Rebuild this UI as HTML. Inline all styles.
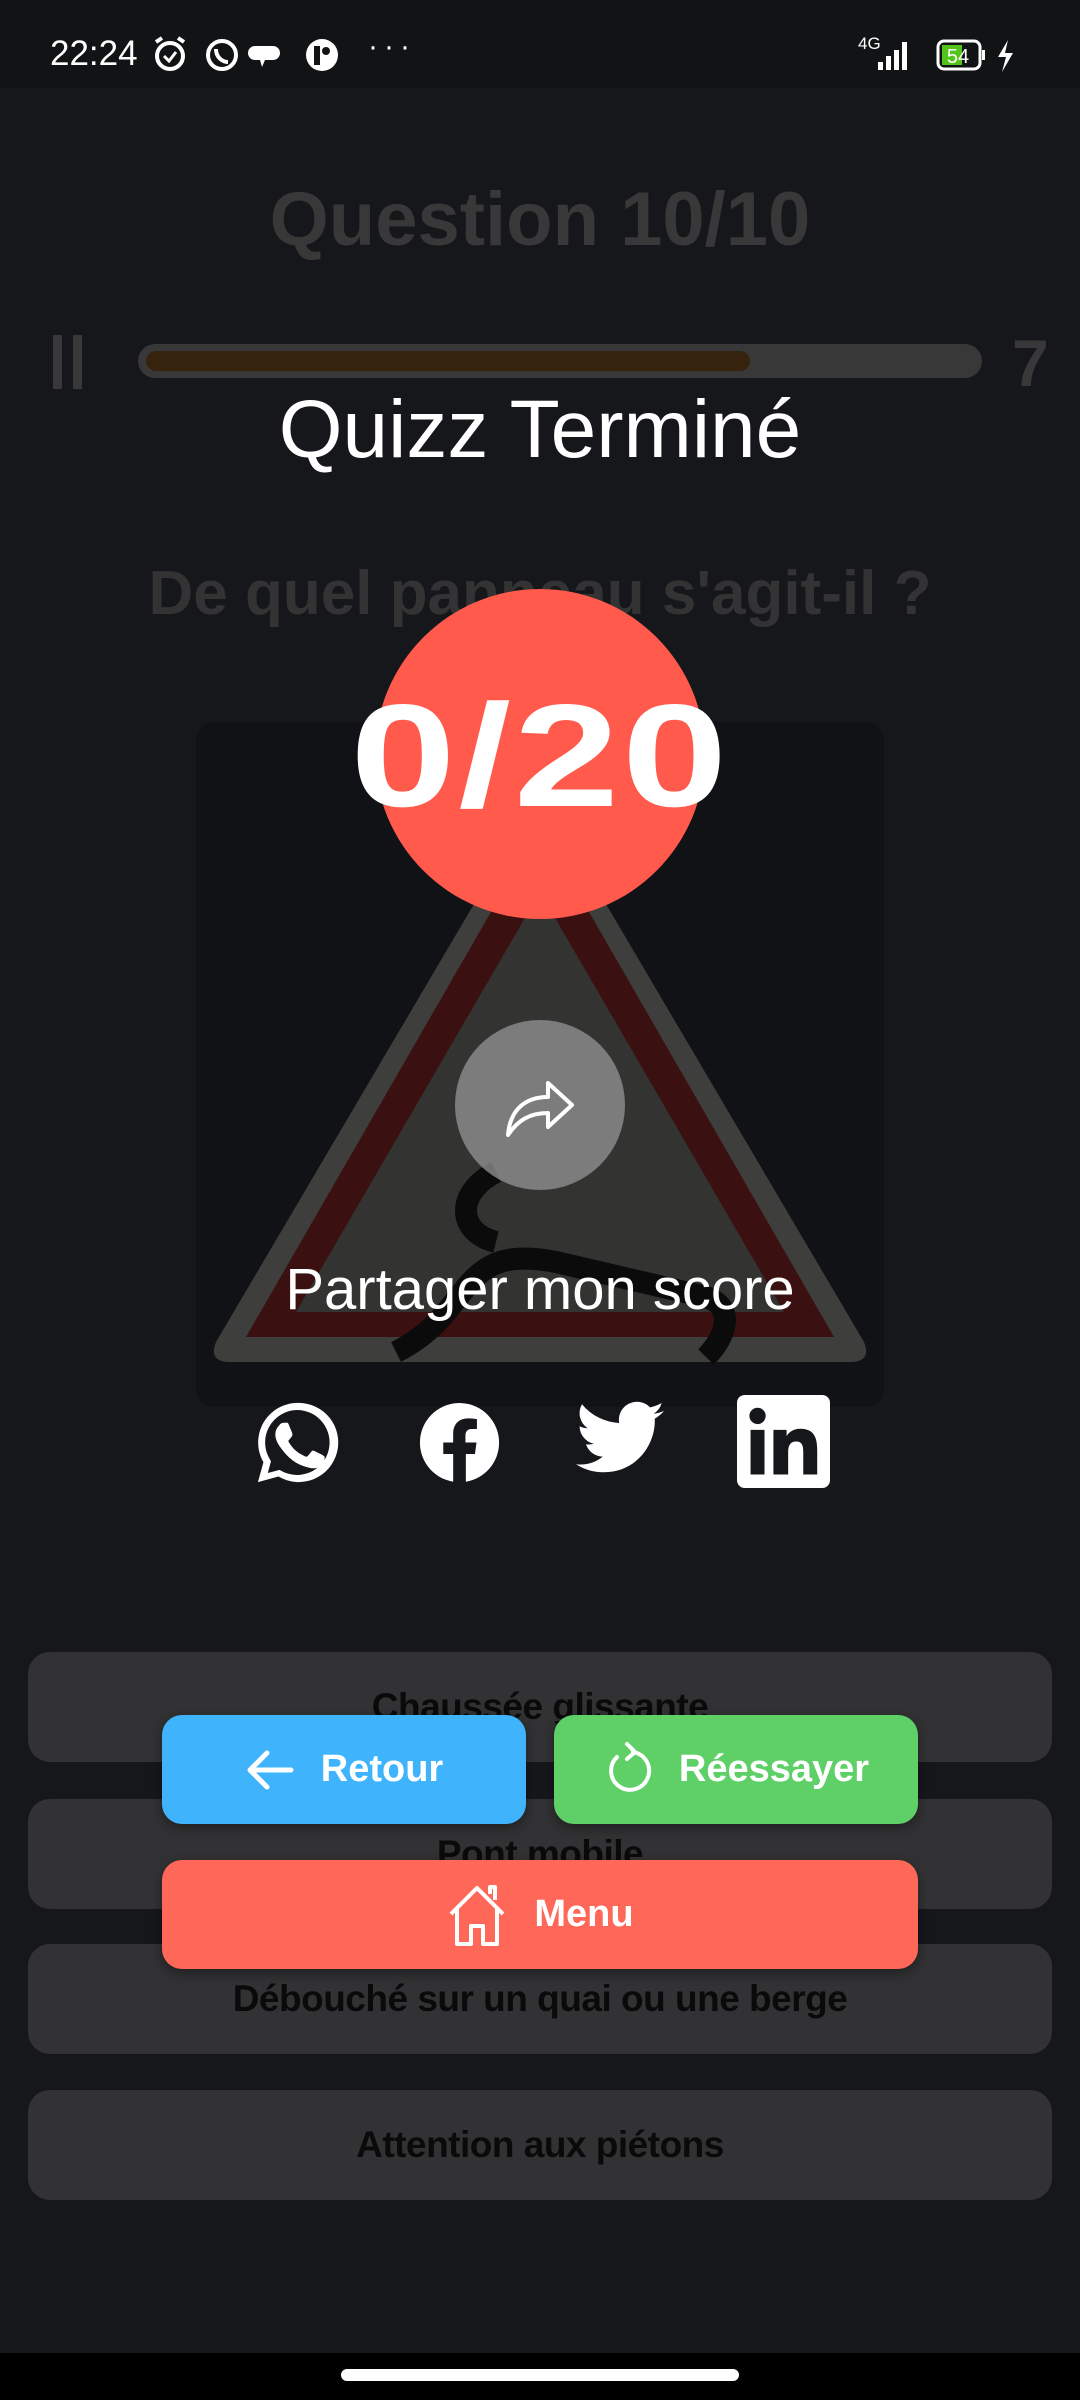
<!DOCTYPE html>
<html><head><meta charset="utf-8"><style>
*{margin:0;padding:0;box-sizing:border-box}
body{width:1080px;height:2400px;background:#15171b;position:relative;overflow:hidden;font-family:"Liberation Sans",sans-serif}
.a{position:absolute}
.c{text-align:center;left:0;width:1080px}
.ans{position:absolute;left:28px;width:1024px;height:110px;background:#323234;border-radius:22px;color:#0a0a0a;font-size:37px;font-weight:bold;letter-spacing:-0.5px;text-align:center;line-height:110px}
.btn{position:absolute;height:109px;border-radius:20px;color:#fff;font-weight:bold;font-size:38px;display:flex;align-items:center;justify-content:center;gap:26px}
</style></head><body>
<div class="a" style="left:0;top:0;width:1080px;height:88px;background:#111315"></div>
<div class="a" style="left:50px;top:34px;color:#fff;font-size:35px">22:24</div>
<svg class="a" style="left:150px;top:34px" width="190" height="42" viewBox="0 0 190 42">
<circle cx="20" cy="22" r="13" fill="none" stroke="#fff" stroke-width="4"/><path d="M14 22l5 5 7-9" stroke="#fff" stroke-width="3" fill="none"/><path d="M6 8l6-4M34 8l-6-4" stroke="#fff" stroke-width="4"/>
<circle cx="72" cy="21" r="14" fill="none" stroke="#fff" stroke-width="4"/><path d="M66 15c0 8 6 13 12 13" stroke="#fff" stroke-width="4" fill="none"/>
<path d="M105 12h18a6 6 0 010 14h-8l-3 7-2-7h-5a7 7 0 010-14z" fill="#fff"/>
<circle cx="172" cy="21" r="16" fill="#fff"/><rect x="164" y="12" width="6" height="19" fill="#111315"/><circle cx="176" cy="17" r="4" fill="#111315"/>
</svg>
<div class="a" style="left:368px;top:30px;color:#fff;font-size:30px;letter-spacing:6px">···</div>
<div class="a" style="left:858px;top:34px;color:#fff;font-size:17px">4G</div>
<svg class="a" style="left:858px;top:38px" width="168" height="36" viewBox="0 0 168 36">
<rect x="20" y="24" width="5" height="8" fill="#fff"/><rect x="28" y="18" width="5" height="14" fill="#fff"/><rect x="36" y="12" width="5" height="20" fill="#fff"/><rect x="44" y="4" width="5" height="28" fill="#fff"/>
<rect x="80" y="3" width="42" height="28" rx="6" fill="none" stroke="#fff" stroke-width="3"/><rect x="84" y="7" width="20" height="20" fill="#52c41a"/><rect x="124" y="12" width="3" height="10" fill="#fff"/>
<text x="100" y="25" font-size="20" fill="#fff" text-anchor="middle" font-family="Liberation Sans">54</text>
<path d="M150 2l-10 17h8l-4 15 11-19h-8z" fill="#fff"/></svg>

<div class="a c" style="top:176px;font-size:76px;font-weight:bold;color:#383838">Question 10/10</div>
<div class="a" style="left:53px;top:335px;width:9px;height:54px;background:#383838"></div>
<div class="a" style="left:73px;top:335px;width:9px;height:54px;background:#383838"></div>
<div class="a" style="left:138px;top:344px;width:844px;height:34px;background:#383838;border-radius:17px"></div>
<div class="a" style="left:146px;top:351px;width:604px;height:20px;background:#35230e;border-radius:10px"></div>
<div class="a" style="left:1012px;top:325px;font-size:66px;font-weight:bold;color:#383838">7</div>
<div class="a c" style="top:383px;font-size:82px;color:#fff">Quizz Terminé</div>
<div class="a c" style="top:558px;font-size:62px;font-weight:bold;color:#333">De quel panneau s'agit-il ?</div>

<div class="a" style="left:196px;top:722px;width:688px;height:685px;background:#111216;border-radius:18px"></div>
<svg class="a" style="left:196px;top:722px" width="688" height="685" viewBox="0 0 688 685">
<path d="M344 70L20 620Q12 640 34 640H654Q676 640 668 620Z" fill="#3e3e3c"/>
<path d="M344 105L50 615H638Z" fill="#3a1010"/>
<path d="M344 170L100 590H588Z" fill="#333331"/>
<path d="M300 520c-40-10-40-50 0-70M200 630c80-40 60-110 160-90l150 35c30 10 20 40 0 60" stroke="#0b0b0b" stroke-width="22" fill="none"/>
</svg>
<div class="a" style="left:375px;top:589px;width:330px;height:330px;border-radius:50%;background:#ff5a4c"></div>
<div class="a c" style="top:672px;font-size:146px;font-weight:bold;color:#fff"><span style="display:inline-block;transform:scaleX(1.3);letter-spacing:2px">0/20</span></div>
<div class="a" style="left:455px;top:1020px;width:170px;height:170px;border-radius:50%;background:rgba(150,150,150,0.75)"></div>
<svg class="a" style="left:500px;top:1065px" width="80" height="80" viewBox="0 0 80 80">
<path d="M8 70C10 45 25 32 48 32V18L72 40 48 62V48C30 48 18 55 8 70Z" fill="none" stroke="#fff" stroke-width="4" stroke-linejoin="round"/></svg>
<div class="a c" style="top:1256px;font-size:58px;color:#fff">Partager mon score</div>

<svg class="a" style="left:250px;top:1395px" width="95" height="95" viewBox="0 0 24 24"><path fill="#fff" d="M12 2A10 10 0 003.4 17L2 22l5.2-1.4A10 10 0 1012 2zm0 1.8a8.2 8.2 0 11-4.2 15.3l-.3-.2-3 .8.8-3-.2-.3A8.2 8.2 0 0112 3.8zM8.5 7c-.3 0-.7.1-1 .5s-1.1 1-1.1 2.5 1.1 2.9 1.2 3.1c.2.2 2.2 3.4 5.3 4.6 2.6 1 3.2.8 3.7.8.6-.1 1.8-.8 2-1.5.3-.7.3-1.3.2-1.5l-.6-.4-2-1c-.3-.1-.5-.1-.7.2l-.9 1.1c-.2.2-.4.2-.7.1-.3-.2-1.300-.5-2.4-1.5-.9-.8-1.5-1.8-1.7-2.1-.2-.3 0-.5.1-.6l.5-.6.3-.5v-.5l-.9-2.2c-.2-.6-.5-.5-.7-.5z"/></svg>
<svg class="a" style="left:412px;top:1395px" width="95" height="95" viewBox="0 0 24 24"><path fill="#fff" d="M22 12a10 10 0 10-11.6 9.9v-7H7.9V12h2.5V9.8c0-2.5 1.5-3.9 3.8-3.900 1.1 0 2.2.2 2.2.2v2.5h-1.3c-1.2 0-1.6.8-1.6 1.6V12h2.8l-.4 2.9h-2.3v7A10 10 0 0022 12z"/></svg>
<svg class="a" style="left:572px;top:1398px" width="96" height="90" viewBox="0 0 24 22"><path fill="#fff" d="M23 3a9 9 0 01-2.6.7A4.5 4.5 0 0022.4 1a9 9 0 01-2.9 1.1A4.5 4.5 0 0011.8 6 12.8 12.8 0 012.5 1.3 4.5 4.5 0 003.9 7.3 4.5 4.5 0 011.9 6.8 4.5 4.5 0 005.5 11.2a4.5 4.5 0 01-2 .1 4.5 4.5 0 004.2 3.1A9 9 0 011 16.3 12.8 12.8 0 007.9 18.3c8.3 0 12.8-6.9 12.8-12.8v-.6A9 9 0 0023 3z"/></svg>
<svg class="a" style="left:737px;top:1395px" width="93" height="93" viewBox="0 0 24 24"><rect width="24" height="24" rx="2" fill="#fff"/><path fill="#15171b" d="M3.5 9h3.6v11.5H3.5zM5.3 3.3a2.1 2.1 0 110 4.2 2.1 2.1 0 010-4.2zM9.4 9h3.4v1.6c.5-.9 1.7-1.9 3.5-1.9 3.7 0 4.4 2.4 4.4 5.6v6.2h-3.6v-5.5c0-1.3 0-3-1.8-3s-2.1 1.4-2.1 2.9v5.6H9.4z"/></svg>

<div class="ans" style="top:1652px">Chaussée glissante</div>
<div class="ans" style="top:1799px">Pont mobile</div>
<div class="ans" style="top:1944px">Débouché sur un quai ou une berge</div>
<div class="ans" style="top:2090px">Attention aux piétons</div>

<div class="btn" style="left:162px;top:1715px;width:364px;background:#3fb4fc;box-shadow:0 4px 12px rgba(0,0,0,.4)">
<svg width="50" height="44" viewBox="0 0 50 44"><path d="M46 22H6M22 5L5 22l17 17" stroke="#fff" stroke-width="5" fill="none" stroke-linecap="round" stroke-linejoin="round"/></svg>Retour</div>
<div class="btn" style="left:554px;top:1715px;width:364px;background:#5fd068;box-shadow:0 4px 12px rgba(0,0,0,.4)">
<svg width="50" height="60" viewBox="0 0 50 60"><path d="M30 12A19 19 0 1 1 14 17" stroke="#fff" stroke-width="4" fill="none" stroke-linecap="round"/><path d="M24 4l8 8-8 7" stroke="#fff" stroke-width="4" fill="none" stroke-linecap="round"/></svg>Réessayer</div>
<div class="btn" style="left:162px;top:1860px;width:756px;background:#ff6759;box-shadow:0 4px 12px rgba(0,0,0,.4)">
<svg width="62" height="66" viewBox="0 0 62 66"><path d="M5 32L31 6l26 26M11 26v36h14V44h12v18h14V26M44 12V5h5v13" stroke="#fff" stroke-width="4" fill="none" stroke-linejoin="round"/></svg>Menu</div>

<div class="a" style="left:0;top:2353px;width:1080px;height:47px;background:#000"></div>
<div class="a" style="left:341px;top:2369px;width:398px;height:12px;border-radius:6px;background:#fff"></div>
</body></html>
